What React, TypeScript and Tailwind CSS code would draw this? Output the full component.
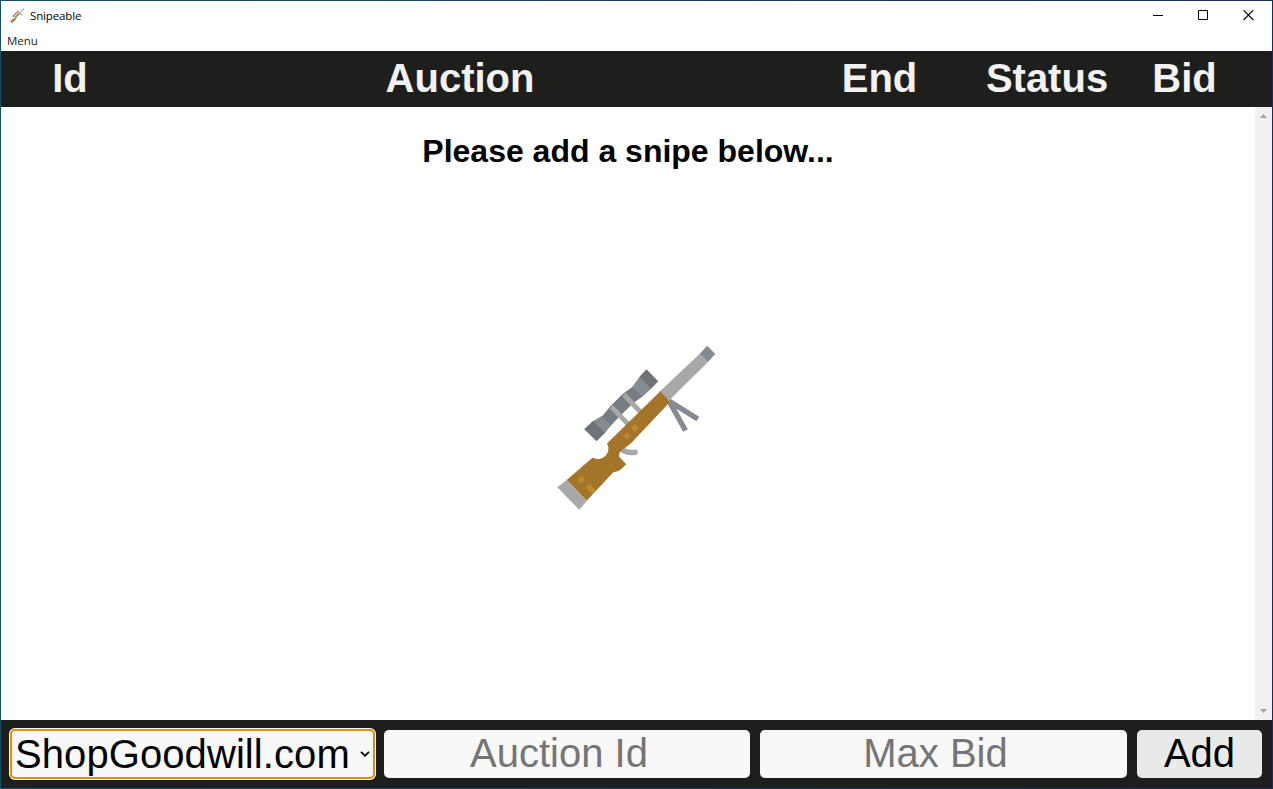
function Rifle({ className }: { className: string }) {
  return (
    <svg viewBox="550 342 172 172" className={className} aria-hidden="true">
      <path d="M669 401L697.8 419M669 401L685.5 430.5" stroke="#868b93" strokeWidth="5.4" fill="none" />
      <path d="M620.5 448.5Q626 453.5 635 452.3" stroke="#a8a8a8" strokeWidth="5.6" strokeLinecap="round" fill="none" />
      <path d="M659.5 391.8L699.5 354L708 362L668.5 401Z" fill="#a8a8a8" />
      <path d="M699.5 354L707.2 345.8L715.3 354L708 362Z" fill="#868b93" />
      <path d="M599 418.3L603.5 414.8L610.5 406L622.7 394L632.5 386.8L643.3 396L633.7 402.8L617.5 418.5L609.3 427.5Z" fill="#777c80" />
      <path d="M592.7 421.3L602 416L611 425L604.7 433.5Z" fill="#868b93" />
      <path d="M584.2 429.3L592.9 421L604.9 433L596.6 441.2Z" fill="#6c7275" />
      <path d="M632.3 387L639.2 377.2L651.3 388.7L643 396Z" fill="#868b93" />
      <path d="M646.5 369.3L658.2 381.3L651 388.9L639 377.3Z" fill="#6c7275" />
      <path d="M611.2 406.7L628 424M623.9 394.7L640.5 412" stroke="#a8a8a8" strokeWidth="4.8" fill="none" />
      <path d="M566.7 480L592.7 457.5A10.3 10.3 0 0 0 607 443.5L660.3 391.3L670 402L634 440Q631 444 624 448.5Q618 452 619.2 456.8L626.3 464.2L620.8 469.6Q618 471.8 613.3 472.3L586.7 500.7Z" fill="#a47428" />
      <path d="M557.3 487.2L566.7 480L586.9 500.7L579.3 509.7Z" fill="#a8a8a8" />
      <path d="M577.5 479.8L581.7 476L585.5 479.7L581.2 483.6ZM585.5 488L589.5 484L596 490.5L592 494.5ZM623 436L627 432L631 435.8L626.8 439.8ZM631 428L635 424L639 428L634.8 432Z" fill="#b98a32" />
    </svg>
  );
}

export default function App() {
  return (
    <div className="flex h-[789px] w-[1273px] flex-col overflow-hidden bg-linear-to-r from-[#15506b] to-[#1b2c5c] p-px font-['Liberation_Sans',Arial,sans-serif] text-black">
      <div className="flex h-[30px] shrink-0 items-center bg-white pl-2">
        <Rifle className="-mt-px size-4" />
        <span className="ml-[5px] font-['Open_Sans',sans-serif] text-[11.5px] leading-4 tracking-[-0.15px]">Snipeable</span>
        <div className="ml-auto flex">
          <button className="flex h-[30px] w-[46px] items-center justify-center" aria-label="Minimize">
            <svg className="-mt-px h-[11px] w-[11px]" viewBox="0 0 11 11"><path d="M0 5.5H10" stroke="black" /></svg>
          </button>
          <button className="flex h-[30px] w-[45px] items-center justify-center" aria-label="Maximize">
            <svg className="-mt-px h-[11px] w-[11px]" viewBox="0 0 11 11"><path d="M.5 .5H9.5V9.5H.5Z" fill="none" stroke="black" /></svg>
          </button>
          <button className="flex h-[30px] w-[46px] items-center justify-center pr-px" aria-label="Close">
            <svg className="-mt-px h-[11px] w-[11px]" viewBox="0 0 11 11"><path d="M.5 .2L10.3 10M10.3 .2L.5 10" stroke="black" strokeWidth="1.1" /></svg>
          </button>
        </div>
      </div>
      <nav className="flex h-5 shrink-0 items-center bg-white pl-1.5 font-['Open_Sans',sans-serif] text-[11.5px] text-[#222]">Menu</nav>
      <header className="grid h-14 shrink-0 grid-cols-[138px_642px_197px_138px_137px] bg-[#1e1f1d] text-center text-[40px] leading-[54px] font-bold text-[#f2f2f2]">
        <span>Id</span>
        <span>Auction</span>
        <span>End</span>
        <span>Status</span>
        <span>Bid</span>
      </header>
      <main className="flex min-h-0 flex-1 bg-white">
        <div className="flex flex-1 flex-col items-center">
          <h1 className="mt-[26px] text-[32px] leading-9 font-bold">Please add a snipe below...</h1>
          <Rifle className="mt-[173px] ml-4 size-[172px]" />
        </div>
        <div className="flex w-[17px] flex-col justify-between bg-[#f1f1f1]">
          <svg className="size-[17px]" viewBox="0 0 17 17"><path d="M5 11L8.5 7L12 11Z" fill="#a3a3a3" /></svg>
          <svg className="size-[17px]" viewBox="0 0 17 17"><path d="M5 6L8.5 10L12 6Z" fill="#a3a3a3" /></svg>
        </div>
      </main>
      <footer className="flex h-[68px] shrink-0 items-start gap-2.5 bg-[#1e1f1d] pt-2.5 pr-2.5 pl-[9px] text-[40px]">
        <button className="-mt-px -mr-px flex h-[50px] w-[365px] shrink-0 items-center justify-between rounded-[5px] bg-[#f8f8f8] pr-[5px] pl-[5px] leading-none ring-1 ring-white outline-2 -outline-offset-2 outline-[#db9200]">
          <span className="tracking-[0.08px]">ShopGoodwill.com</span>
          <svg className="h-2 w-2.5" viewBox="0 0 10 8"><path d="M1 1.8L5 5.8L9 1.8" fill="none" stroke="black" strokeWidth="1.8" /></svg>
        </button>
        <input className="h-12 w-[366px] rounded-[5px] bg-[#f8f8f8] pr-4 pb-0.5 text-center placeholder:text-[#757575]" placeholder="Auction Id" />
        <input className="h-12 w-[367px] rounded-[5px] bg-[#f8f8f8] pr-4 pb-0.5 text-center placeholder:text-[#757575]" placeholder="Max Bid" />
        <button className="flex h-12 w-[125px] items-center justify-center rounded-[5px] bg-[#e9e9e9] pb-0.5 leading-[46px]">Add</button>
      </footer>
    </div>
  );
}
